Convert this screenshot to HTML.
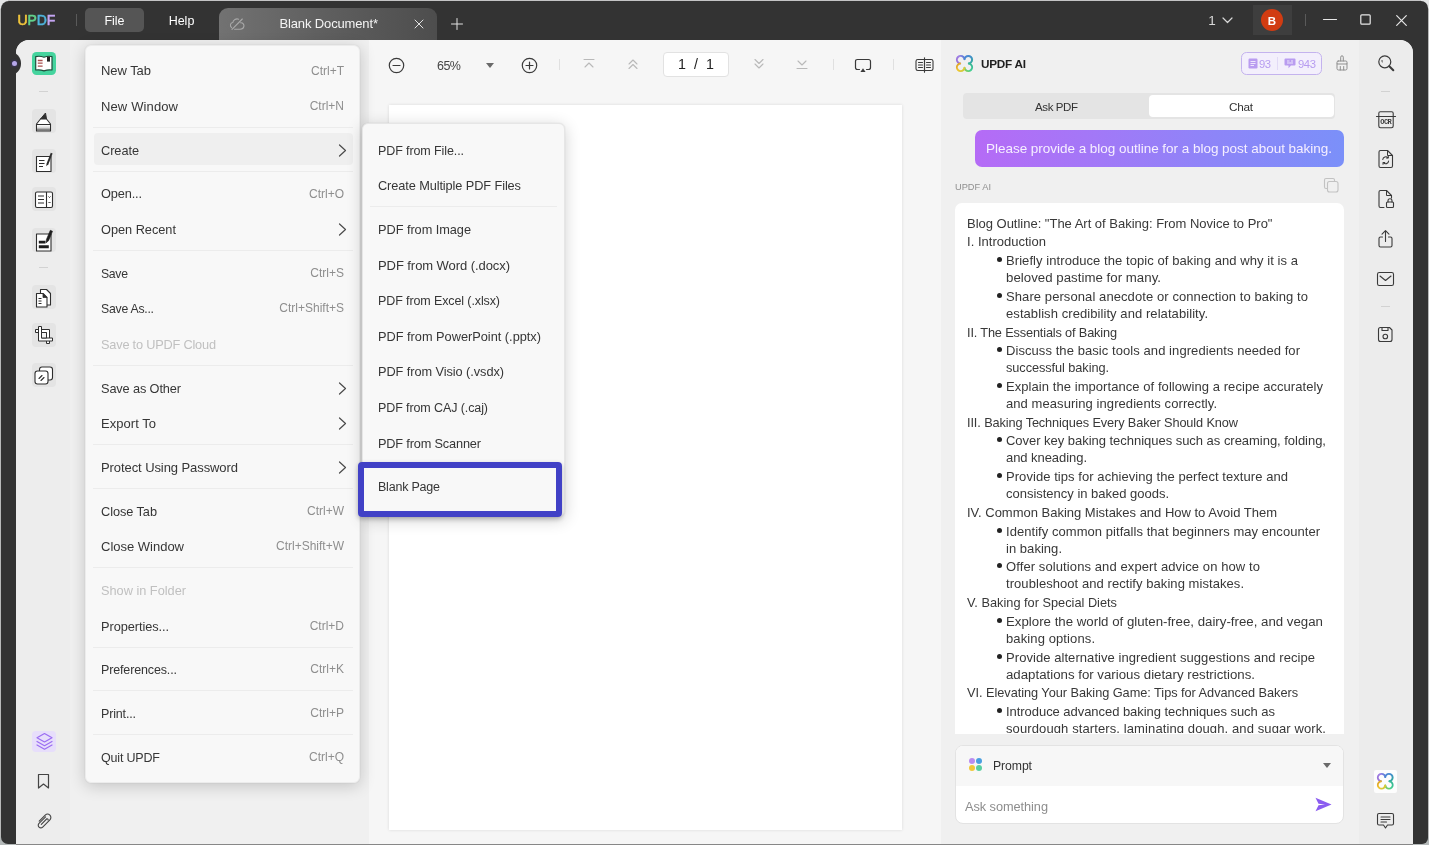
<!DOCTYPE html>
<html lang="en"><head><meta charset="utf-8"><title>UPDF</title>
<style>
*{box-sizing:border-box;margin:0;padding:0}
html,body{width:1429px;height:845px;overflow:hidden}
body{position:relative;background:#333333;font-family:"Liberation Sans",sans-serif;}
.t{position:absolute;white-space:pre;}
.a{position:absolute;}
svg{position:absolute;overflow:visible}
.sep{position:absolute;height:1px;background:#ececec}
#root{position:absolute;left:0;top:0;width:1429px;height:845px;will-change:transform;}

</style></head>
<body>
<div id="root">
<div class="a" style="left:0;top:0;width:1429px;height:845px;background:linear-gradient(180deg,#e4e5e6 0,#e4e5e6 8px,#b8b9b9 9px,#b8b9b9 836px,#b4b9b9 837px)"></div>
<div class="a" style="left:8px;top:0;width:1413px;height:1px;background:#c4c4c5"></div>
<div class="a" style="left:1px;top:1px;width:1427px;height:843px;background:#333333;border-radius:8px 7px 6px 7px"></div>
<div class="a" style="left:16px;top:844px;width:1397px;height:1px;background:#878787"></div>
<div class="a" id="content" style="left:16px;top:40px;width:1397px;height:804px;background:#f6f6f6;border-radius:13px 13px 0 0;overflow:hidden"><div class="a" style="left:0;top:0;width:54px;height:804px;background:#ededed"></div><div class="a" style="left:54px;top:0;width:298.5px;height:804px;background:#f0f0f0"></div><div class="a" style="left:925px;top:0;width:418px;height:804px;background:#f0f0f0"></div><div class="a" style="left:1343px;top:0;width:54px;height:804px;background:#ececec"></div></div>
<div class="a" style="left:389px;top:105px;width:513px;height:725px;background:#ffffff;box-shadow:0 0 3px rgba(0,0,0,.12)"></div>
<div class="t" style="left:17.500px;top:10px;line-height:20px;font-size:14px;font-weight:400;letter-spacing:-0.150px"><span style="color:#f6c93c;-webkit-text-stroke:0.550px #f6c93c">U</span><span style="color:#62d28c;-webkit-text-stroke:0.550px #62d28c">P</span><span style="color:#4eb4dc;-webkit-text-stroke:0.550px #4eb4dc">D</span><span style="color:#c4a5f2;-webkit-text-stroke:0.550px #c4a5f2">F</span></div>
<div class="a" style="left:76px;top:14px;width:1px;height:12px;background:#5a5a5a"></div>
<div class="a" style="left:85px;top:8px;width:59px;height:23.5px;background:#555555;border-radius:5px"></div>
<div class="t" style="left:-85.5px;width:400px;text-align:center;top:12.0px;line-height:18px;font-size:12.5px;color:#ffffff;">File</div>
<div class="t" style="left:-18.5px;width:400px;text-align:center;top:12.0px;line-height:18px;font-size:12.5px;color:#ffffff;">Help</div>
<div class="a" style="left:219px;top:8px;width:218px;height:32px;border-radius:9px 9px 0 0;background:linear-gradient(90deg,#727272 0%,#606060 45%,#4d4d4d 100%)"></div>
<div class="t" style="left:279.5px;top:14.0px;line-height:19px;font-size:13.5px;color:#f4f4f4;letter-spacing:-0.140px;font-size:13.0px;">Blank Document*</div>
<svg style="left:229px;top:16.500px" width="16" height="14" viewBox="0 0 16 14" fill="none" stroke="#a9a9a9" stroke-width="1.100" stroke-linecap="round"><path d="M3 12.300 L13.300 2"/><path d="M2.600 10.600 C0.600 9 1.200 5.800 3.800 5.500 C4.300 2.800 7 1.300 9.600 2.200"/><path d="M11.600 5.800 C14 5.600 15.300 7.600 14.900 9.400 C14.500 11.400 12.900 12.300 11.200 12.300 L5.600 12.300"/></svg>
<svg style="left:414px;top:19px" width="10" height="10" viewBox="0 0 10 10" stroke="#e2e2e2" stroke-width="1" stroke-linecap="round"><path d="M1 1 L9 9 M9 1 L1 9"/></svg>
<svg style="left:451px;top:18px" width="12" height="12" viewBox="0 0 12 12" stroke="#e2e2e2" stroke-width="1" stroke-linecap="round"><path d="M6 0.5 V11.5 M0.5 6 H11.5"/></svg>
<div class="t" style="left:1012px;width:400px;text-align:center;top:11.0px;line-height:19px;font-size:13.5px;color:#d8d8d8;">1</div>
<svg style="left:1222px;top:16.500px" width="11" height="7" viewBox="0 0 11 7" fill="none" stroke="#d8d8d8" stroke-width="1.2" stroke-linecap="round" stroke-linejoin="round"><path d="M1 1 L5.5 5.5 L10 1"/></svg>
<div class="a" style="left:1253px;top:5px;width:39px;height:30px;background:#3e3e3e"></div>
<div class="a" style="left:1261px;top:9px;width:22px;height:22px;border-radius:50%;background:#d13c12"></div>
<div class="t" style="left:1072px;width:400px;text-align:center;top:12.5px;line-height:16px;font-size:11.5px;color:#ffffff;font-weight:700;">B</div>
<div class="a" style="left:1305px;top:14px;width:1px;height:12px;background:#5a5a5a"></div>
<svg style="left:1323px;top:13px" width="14" height="14" viewBox="0 0 14 14" stroke="#e8e8e8" stroke-width="1.2" stroke-linecap="round"><path d="M0.5 6.5 H13.5"/></svg>
<svg style="left:1360px;top:14px" width="11" height="11" viewBox="0 0 11 11" fill="none" stroke="#e8e8e8" stroke-width="1.2"><rect x="0.8" y="0.8" width="9.4" height="9.4" rx="1"/></svg>
<svg style="left:1396px;top:15px" width="11" height="11" viewBox="0 0 11 11" stroke="#e8e8e8" stroke-width="1.2" stroke-linecap="round"><path d="M0.7 0.7 L10.3 10.3 M10.3 0.7 L0.7 10.3"/></svg>
<svg style="left:388px;top:56.5px" width="17" height="17" viewBox="0 0 17 17" fill="none" stroke="#3a3a3a" stroke-width="1.2" stroke-linecap="round"><circle cx="8.5" cy="8.5" r="7.2"/><path d="M5 8.5 H12"/></svg>
<div class="t" style="left:437px;top:56.5px;line-height:18px;font-size:13px;color:#444444;letter-spacing:-0.516px;font-size:12.5px;">65%</div>
<svg style="left:486px;top:63px" width="8" height="5" viewBox="0 0 8 5"><path d="M0 0 H8 L4 5 Z" fill="#6a6a6a"/></svg>
<svg style="left:521px;top:56.5px" width="17" height="17" viewBox="0 0 17 17" fill="none" stroke="#3a3a3a" stroke-width="1.2" stroke-linecap="round"><circle cx="8.5" cy="8.5" r="7.2"/><path d="M5 8.5 H12 M8.5 5 V12"/></svg>
<div class="a" style="left:559px;top:59px;width:1px;height:11px;background:#e0e0e0"></div>
<svg style="left:583px;top:58px" width="12" height="12" viewBox="0 0 12 12" fill="none" stroke="#b9b9b9" stroke-width="1.1" stroke-linecap="round" stroke-linejoin="round"><path d="M1 1.5 H11 M2 9 L6 5 L10 9"/></svg>
<svg style="left:627px;top:58px" width="12" height="12" viewBox="0 0 12 12" fill="none" stroke="#b9b9b9" stroke-width="1.1" stroke-linecap="round" stroke-linejoin="round"><path d="M2 6 L6 2 L10 6 M2 10.5 L6 6.5 L10 10.5"/></svg>
<div class="a" style="left:663px;top:52px;width:66px;height:25px;background:#ffffff;border:1px solid #e2e2e2;border-radius:4px"></div>
<div class="t" style="left:678px;top:54.0px;line-height:20px;font-size:14px;color:#222222;letter-spacing:0.057px;font-size:14.25px;">1  /  1</div>
<svg style="left:753px;top:58px" width="12" height="12" viewBox="0 0 12 12" fill="none" stroke="#b9b9b9" stroke-width="1.1" stroke-linecap="round" stroke-linejoin="round"><path d="M2 1.5 L6 5.5 L10 1.5 M2 6 L6 10 L10 6"/></svg>
<svg style="left:796px;top:58px" width="12" height="12" viewBox="0 0 12 12" fill="none" stroke="#b9b9b9" stroke-width="1.1" stroke-linecap="round" stroke-linejoin="round"><path d="M2 3 L6 7 L10 3 M1 10.5 H11"/></svg>
<div class="a" style="left:833px;top:59px;width:1px;height:11px;background:#e0e0e0"></div>
<svg style="left:854px;top:57.5px" width="18" height="16" viewBox="0 0 18 16" fill="none" stroke="#3a3a3a" stroke-width="1.2" stroke-linecap="round" stroke-linejoin="round"><path d="M5.5 11.5 H3.5 Q1.5 11.500 1.500 9.500 V3.500 Q1.500 1.500 3.500 1.500 H14.500 Q16.500 1.500 16.500 3.500 V9.500 Q16.500 11.500 14.500 11.500 H12.5"/><path d="M9 10.2 L11.600 14 H6.400 Z" fill="#3a3a3a" stroke="none"/></svg>
<div class="a" style="left:893px;top:59px;width:1px;height:11px;background:#e0e0e0"></div>
<svg style="left:915px;top:56.5px" width="19" height="16" viewBox="0 0 19 16" fill="none" stroke="#3a3a3a" stroke-width="1.1" stroke-linecap="round" stroke-linejoin="round"><path d="M9.5 2.5 V14.5 M9.5 2.500 H2.800 Q1 2.500 1 4.200 V11.800 Q1 13.500 2.800 13.500 H9.5 M9.5 2.500 H16.200 Q18 2.500 18 4.200 V11.800 Q18 13.500 16.200 13.500 H9.5"/><path d="M3.500 5.500 H7.500 M3.500 8 H7.500 M3.500 10.500 H7.500 M11.500 5.500 H15.500 M11.500 8 H15.500 M11.500 10.500 H15.500"/><path d="M9.5 0.800 V15.200"/></svg>
<div class="a" style="left:85px;top:45px;width:275px;height:737.5px;background:#f8f8f8;border-radius:6px;border:1px solid #ececec;box-shadow:0 3px 16px rgba(0,0,0,.19),0 0 2px rgba(0,0,0,.10)"></div>
<div class="a" style="left:94px;top:133.2px;width:259px;height:31.6px;background:#efefef;border-radius:4px"></div>
<div class="t" style="left:101px;top:62.4px;line-height:18px;font-size:13px;color:#363636;letter-spacing:-0.057px;font-size:13.0px;">New Tab</div>
<div class="t" style="right:1085px;top:62.5px;line-height:17px;font-size:12px;color:#8e8e8e;">Ctrl+T</div>
<div class="t" style="left:101px;top:98.0px;line-height:18px;font-size:13px;color:#363636;letter-spacing:0.127px;font-size:13.0px;">New Window</div>
<div class="t" style="right:1085px;top:98.1px;line-height:17px;font-size:12px;color:#8e8e8e;">Ctrl+N</div>
<div class="sep" style="left:93px;top:127px;width:260px"></div>
<div class="t" style="left:101px;top:141.7px;line-height:18px;font-size:13px;color:#363636;letter-spacing:-0.056px;font-size:12.75px;">Create</div>
<svg style="left:338px;top:143.7px" width="9" height="13" viewBox="0 0 9 13" fill="none" stroke="#4a4a4a" stroke-width="1.2" stroke-linecap="round" stroke-linejoin="round"><path d="M1.500 1 L7.500 6.500 L1.500 12"/></svg>
<div class="sep" style="left:93px;top:171px;width:260px"></div>
<div class="t" style="left:101px;top:185.4px;line-height:18px;font-size:13px;color:#363636;letter-spacing:-0.138px;font-size:12.75px;">Open...</div>
<div class="t" style="right:1085px;top:185.5px;line-height:17px;font-size:12px;color:#8e8e8e;">Ctrl+O</div>
<div class="t" style="left:101px;top:221.0px;line-height:18px;font-size:13px;color:#363636;letter-spacing:-0.014px;font-size:12.75px;">Open Recent</div>
<svg style="left:338px;top:223.0px" width="9" height="13" viewBox="0 0 9 13" fill="none" stroke="#4a4a4a" stroke-width="1.2" stroke-linecap="round" stroke-linejoin="round"><path d="M1.500 1 L7.500 6.500 L1.500 12"/></svg>
<div class="sep" style="left:93px;top:250px;width:260px"></div>
<div class="t" style="left:101px;top:264.7px;line-height:18px;font-size:13px;color:#363636;letter-spacing:-0.307px;font-size:12.25px;">Save</div>
<div class="t" style="right:1085px;top:264.8px;line-height:17px;font-size:12px;color:#8e8e8e;">Ctrl+S</div>
<div class="t" style="left:101px;top:300.3px;line-height:18px;font-size:13px;color:#363636;letter-spacing:-0.240px;font-size:12.25px;">Save As...</div>
<div class="t" style="right:1085px;top:300.4px;line-height:17px;font-size:12px;color:#8e8e8e;">Ctrl+Shift+S</div>
<div class="t" style="left:101px;top:335.9px;line-height:18px;font-size:13px;color:#c0c0c0;letter-spacing:-0.197px;font-size:12.75px;">Save to UPDF Cloud</div>
<div class="sep" style="left:93px;top:365px;width:260px"></div>
<div class="t" style="left:101px;top:379.6px;line-height:18px;font-size:13px;color:#363636;letter-spacing:-0.125px;font-size:12.75px;">Save as Other</div>
<svg style="left:338px;top:381.6px" width="9" height="13" viewBox="0 0 9 13" fill="none" stroke="#4a4a4a" stroke-width="1.2" stroke-linecap="round" stroke-linejoin="round"><path d="M1.500 1 L7.500 6.500 L1.500 12"/></svg>
<div class="t" style="left:101px;top:415.2px;line-height:18px;font-size:13px;color:#363636;letter-spacing:0.039px;font-size:13.0px;">Export To</div>
<svg style="left:338px;top:417.2px" width="9" height="13" viewBox="0 0 9 13" fill="none" stroke="#4a4a4a" stroke-width="1.2" stroke-linecap="round" stroke-linejoin="round"><path d="M1.500 1 L7.500 6.500 L1.500 12"/></svg>
<div class="sep" style="left:93px;top:444px;width:260px"></div>
<div class="t" style="left:101px;top:458.9px;line-height:18px;font-size:13px;color:#363636;letter-spacing:-0.083px;font-size:13.0px;">Protect Using Password</div>
<svg style="left:338px;top:460.9px" width="9" height="13" viewBox="0 0 9 13" fill="none" stroke="#4a4a4a" stroke-width="1.2" stroke-linecap="round" stroke-linejoin="round"><path d="M1.500 1 L7.500 6.500 L1.500 12"/></svg>
<div class="sep" style="left:93px;top:488px;width:260px"></div>
<div class="t" style="left:101px;top:502.6px;line-height:18px;font-size:13px;color:#363636;letter-spacing:-0.059px;font-size:12.75px;">Close Tab</div>
<div class="t" style="right:1085px;top:502.7px;line-height:17px;font-size:12px;color:#8e8e8e;">Ctrl+W</div>
<div class="t" style="left:101px;top:538.2px;line-height:18px;font-size:13px;color:#363636;letter-spacing:-0.009px;font-size:13.0px;">Close Window</div>
<div class="t" style="right:1085px;top:538.3px;line-height:17px;font-size:12px;color:#8e8e8e;">Ctrl+Shift+W</div>
<div class="sep" style="left:93px;top:567px;width:260px"></div>
<div class="t" style="left:101px;top:581.9px;line-height:18px;font-size:13px;color:#c0c0c0;letter-spacing:-0.004px;font-size:12.75px;">Show in Folder</div>
<div class="t" style="left:101px;top:617.5px;line-height:18px;font-size:13px;color:#363636;letter-spacing:-0.062px;font-size:12.75px;">Properties...</div>
<div class="t" style="right:1085px;top:617.6px;line-height:17px;font-size:12px;color:#8e8e8e;">Ctrl+D</div>
<div class="sep" style="left:93px;top:647px;width:260px"></div>
<div class="t" style="left:101px;top:661.2px;line-height:18px;font-size:13px;color:#363636;letter-spacing:-0.141px;font-size:12.5px;">Preferences...</div>
<div class="t" style="right:1085px;top:661.3px;line-height:17px;font-size:12px;color:#8e8e8e;">Ctrl+K</div>
<div class="sep" style="left:93px;top:690px;width:260px"></div>
<div class="t" style="left:101px;top:704.9px;line-height:18px;font-size:13px;color:#363636;letter-spacing:-0.161px;font-size:12.5px;">Print...</div>
<div class="t" style="right:1085px;top:705.0px;line-height:17px;font-size:12px;color:#8e8e8e;">Ctrl+P</div>
<div class="sep" style="left:93px;top:734px;width:260px"></div>
<div class="t" style="left:101px;top:748.6px;line-height:18px;font-size:13px;color:#363636;letter-spacing:-0.180px;font-size:12.5px;">Quit UPDF</div>
<div class="t" style="right:1085px;top:748.7px;line-height:17px;font-size:12px;color:#8e8e8e;">Ctrl+Q</div>
<div class="a" style="left:362px;top:123px;width:203px;height:394px;background:#f8f8f8;border-radius:6px;border:1px solid #e6e6e6;box-shadow:0 3px 16px rgba(0,0,0,.19),0 0 2px rgba(0,0,0,.10)"></div>
<div class="t" style="left:378px;top:141.7px;line-height:18px;font-size:13px;color:#363636;letter-spacing:-0.101px;font-size:12.5px;">PDF from File...</div>
<div class="t" style="left:378px;top:177.3px;line-height:18px;font-size:13px;color:#363636;letter-spacing:-0.094px;font-size:12.75px;">Create Multiple PDF Files</div>
<div class="sep" style="left:370px;top:206px;width:187px"></div>
<div class="t" style="left:378px;top:221.0px;line-height:18px;font-size:13px;color:#363636;letter-spacing:-0.041px;font-size:12.75px;">PDF from Image</div>
<div class="t" style="left:378px;top:256.6px;line-height:18px;font-size:13px;color:#363636;letter-spacing:-0.070px;font-size:13.0px;">PDF from Word (.docx)</div>
<div class="t" style="left:378px;top:292.2px;line-height:18px;font-size:13px;color:#363636;letter-spacing:-0.110px;font-size:12.5px;">PDF from Excel (.xlsx)</div>
<div class="t" style="left:378px;top:327.8px;line-height:18px;font-size:13px;color:#363636;letter-spacing:0.001px;font-size:12.75px;">PDF from PowerPoint (.pptx)</div>
<div class="t" style="left:378px;top:363.4px;line-height:18px;font-size:13px;color:#363636;letter-spacing:-0.062px;font-size:12.75px;">PDF from Visio (.vsdx)</div>
<div class="t" style="left:378px;top:399.0px;line-height:18px;font-size:13px;color:#363636;letter-spacing:-0.101px;font-size:12.5px;">PDF from CAJ (.caj)</div>
<div class="t" style="left:378px;top:434.6px;line-height:18px;font-size:13px;color:#363636;letter-spacing:-0.172px;font-size:12.75px;">PDF from Scanner</div>
<div class="t" style="left:378px;top:478.3px;line-height:18px;font-size:13px;color:#363636;letter-spacing:-0.215px;font-size:12.5px;">Blank Page</div>
<div class="a" style="left:358px;top:462px;width:204px;height:54.5px;border:6.6px solid #4141c6;border-radius:4px;box-shadow:0 2px 5px rgba(0,0,0,.25)"></div>
<svg style="left:955.2px;top:53.7px" width="19" height="19" viewBox="0 0 20 20" fill="none" stroke-width="2.1" stroke-linecap="round"><defs><linearGradient id="ca1" gradientUnits="userSpaceOnUse" x1="2" y1="9" x2="10" y2="4"><stop offset="0" stop-color="#9a72d8"/><stop offset="0.6" stop-color="#9f80e6"/><stop offset="1" stop-color="#5d7fd8"/></linearGradient><linearGradient id="cb1" gradientUnits="userSpaceOnUse" x1="10" y1="4" x2="17" y2="10"><stop offset="0" stop-color="#4c86d4"/><stop offset="0.6" stop-color="#3f93c4"/><stop offset="1" stop-color="#35ac9c"/></linearGradient><linearGradient id="cc1" gradientUnits="userSpaceOnUse" x1="17" y1="10" x2="10" y2="17"><stop offset="0" stop-color="#36b596"/><stop offset="0.6" stop-color="#45d192"/><stop offset="1" stop-color="#86cc58"/></linearGradient><linearGradient id="cd1" gradientUnits="userSpaceOnUse" x1="10" y1="17" x2="3" y2="10"><stop offset="0" stop-color="#cfca3c"/><stop offset="0.5" stop-color="#f2c62f"/><stop offset="1" stop-color="#dda22a"/></linearGradient></defs><path d="M5.400 10 Q4.100 9.750 3.170 8.830 A4 4 0 0 1 8.830 3.170 Q9.750 4.100 10 5.400" stroke="url(#ca1)"/><path d="M10 5.400 Q10.250 4.100 11.170 3.170 A4 4 0 0 1 16.830 8.830 Q15.900 9.750 14.600 10" stroke="url(#cb1)"/><path d="M14.600 10 Q15.900 10.250 16.830 11.170 A4 4 0 0 1 11.170 16.830 Q10.250 15.900 10 14.600" stroke="url(#cc1)"/><path d="M10 14.600 Q9.750 15.900 8.830 16.830 A4 4 0 0 1 3.170 11.170 Q4.100 10.250 5.400 10" stroke="url(#cd1)"/></svg>
<div class="t" style="left:981px;top:54.5px;line-height:18px;font-size:12.5px;color:#1f1f1f;font-weight:700;letter-spacing:-0.263px;font-size:11.75px;">UPDF AI</div>
<div class="a" style="left:1241px;top:52px;width:81px;height:23px;border:1px solid #c4b3ee;border-radius:5.500px;background:#f3effc"></div>
<svg style="left:1248px;top:58px" width="10" height="11" viewBox="0 0 10 11"><rect x="0.5" y="0.5" width="9" height="10" rx="1.2" fill="#b99cf0"/><path d="M2.500 3.500 H7.500 M2.500 5.500 H7.500 M2.500 7.500 H6" stroke="#f3eefd" stroke-width="0.9"/></svg>
<div class="t" style="left:1259px;top:55.5px;line-height:17px;font-size:12px;color:#b79cf0;letter-spacing:-0.516px;font-size:11.25px;">93</div>
<div class="a" style="left:1277px;top:57px;width:1px;height:13px;background:#e2daf6"></div>
<svg style="left:1284px;top:58px" width="12" height="11" viewBox="0 0 12 11"><path d="M1.500 0.500 H10.500 Q11.500 0.500 11.500 1.500 V6.500 Q11.500 7.500 10.500 7.500 H7 L4.500 10.300 V7.500 H1.500 Q0.500 7.500 0.500 6.500 V1.500 Q0.500 0.500 1.500 0.500 Z" fill="#b99cf0"/><path d="M3 3 H5.500 M7 3 H9 M3 5 H9" stroke="#f3eefd" stroke-width="0.9"/></svg>
<div class="t" style="left:1298px;top:55.5px;line-height:17px;font-size:12px;color:#b79cf0;letter-spacing:-0.391px;font-size:11.25px;">943</div>
<svg style="left:1336px;top:54.500px" width="12" height="16" viewBox="0 0 12 16" fill="none" stroke="#8f8f8f" stroke-width="1" stroke-linecap="round" stroke-linejoin="round"><path d="M4.700 6 V2.200 Q4.700 0.800 6 0.800 Q7.300 0.800 7.300 2.200 V6"/><path d="M2.200 6 H9.800 Q11 6 11 7.200 V9 H1 V7.200 Q1 6 2.200 6 Z"/><path d="M1 9 V13.500 Q1 15 2.500 15 H9.500 Q11 15 11 13.500 V9 M4.300 11.500 V15 M7.700 11.500 V15"/></svg>
<div class="a" style="left:963px;top:93px;width:372px;height:26px;background:#e4e4e4;border-radius:4px"></div>
<div class="a" style="left:1149px;top:95px;width:185px;height:22px;background:#ffffff;border-radius:4px"></div>
<div class="t" style="left:1035px;top:97.5px;line-height:18px;font-size:12.5px;color:#333333;letter-spacing:-0.396px;font-size:11.5px;">Ask PDF</div>
<div class="t" style="left:1229px;top:97.5px;line-height:18px;font-size:12.5px;color:#333333;letter-spacing:-0.276px;font-size:11.75px;">Chat</div>
<div class="a" style="left:975px;top:129.7px;width:369px;height:37px;border-radius:7px;background:linear-gradient(90deg,#b56bf6 0%,#a477f7 30%,#8d85f8 65%,#7b90f9 100%)"></div>
<div class="t" style="left:986px;top:139.0px;line-height:19px;font-size:13.5px;color:#f6efff;letter-spacing:-0.026px;font-size:13.5px;">Please provide a blog outline for a blog post about baking.</div>
<div class="t" style="left:955px;top:180.5px;line-height:13px;font-size:9.5px;color:#8f8f8f;letter-spacing:0.003px;font-size:9.25px;">UPDF AI</div>
<svg style="left:1323px;top:177px" width="16" height="16" viewBox="0 0 16 16" fill="none" stroke="#c2c2c2" stroke-width="1.1" stroke-linejoin="round"><path d="M4.500 11.500 H3 Q1.500 11.500 1.500 10 V3 Q1.500 1.500 3 1.500 H10 Q11.500 1.500 11.500 3 V4.500"/><rect x="4.500" y="4.500" width="10.500" height="10.500" rx="2"/></svg>
<div class="a" style="left:955px;top:203px;width:388.5px;height:531px;background:#ffffff;border-radius:7px 7px 0 0"></div>
<div class="a" style="left:955px;top:203px;width:388px;height:530.3px;overflow:hidden">
<div class="t" style="left:12px;top:11.7px;line-height:18px;font-size:13px;color:#383838;letter-spacing:-0.014px;font-size:13.0px;">Blog Outline: &quot;The Art of Baking: From Novice to Pro&quot;</div>
<div class="t" style="left:12px;top:29.7px;line-height:18px;font-size:13px;color:#383838;letter-spacing:0.016px;font-size:13.0px;">I. Introduction</div>
<div class="a" style="left:42px;top:53.8px;width:5px;height:5px;border-radius:50%;background:#222"></div>
<div class="t" style="left:51px;top:48.7px;line-height:18px;font-size:13px;color:#383838;letter-spacing:0.071px;font-size:13.0px;">Briefly introduce the topic of baking and why it is a</div>
<div class="t" style="left:51px;top:65.7px;line-height:18px;font-size:13px;color:#383838;letter-spacing:0.024px;font-size:13.25px;">beloved pastime for many.</div>
<div class="a" style="left:42px;top:89.8px;width:5px;height:5px;border-radius:50%;background:#222"></div>
<div class="t" style="left:51px;top:84.7px;line-height:18px;font-size:13px;color:#383838;letter-spacing:0.086px;font-size:13.0px;">Share personal anecdote or connection to baking to</div>
<div class="t" style="left:51px;top:101.7px;line-height:18px;font-size:13px;color:#383838;letter-spacing:0.074px;font-size:13.0px;">establish credibility and relatability.</div>
<div class="t" style="left:12px;top:120.7px;line-height:18px;font-size:13px;color:#383838;letter-spacing:-0.158px;font-size:12.75px;">II. The Essentials of Baking</div>
<div class="a" style="left:42px;top:144.3px;width:5px;height:5px;border-radius:50%;background:#222"></div>
<div class="t" style="left:51px;top:139.2px;line-height:18px;font-size:13px;color:#383838;letter-spacing:0.071px;font-size:13.0px;">Discuss the basic tools and ingredients needed for</div>
<div class="t" style="left:51px;top:156.2px;line-height:18px;font-size:13px;color:#383838;letter-spacing:-0.070px;font-size:12.75px;">successful baking.</div>
<div class="a" style="left:42px;top:179.8px;width:5px;height:5px;border-radius:50%;background:#222"></div>
<div class="t" style="left:51px;top:174.7px;line-height:18px;font-size:13px;color:#383838;letter-spacing:0.062px;font-size:13.0px;">Explain the importance of following a recipe accurately</div>
<div class="t" style="left:51px;top:191.7px;line-height:18px;font-size:13px;color:#383838;letter-spacing:0.069px;font-size:13.0px;">and measuring ingredients correctly.</div>
<div class="t" style="left:12px;top:210.7px;line-height:18px;font-size:13px;color:#383838;letter-spacing:-0.115px;font-size:12.75px;">III. Baking Techniques Every Baker Should Know</div>
<div class="a" style="left:42px;top:234.3px;width:5px;height:5px;border-radius:50%;background:#222"></div>
<div class="t" style="left:51px;top:229.2px;line-height:18px;font-size:13px;color:#383838;letter-spacing:-0.030px;font-size:13.0px;">Cover key baking techniques such as creaming, folding,</div>
<div class="t" style="left:51px;top:246.2px;line-height:18px;font-size:13px;color:#383838;letter-spacing:-0.057px;font-size:13.0px;">and kneading.</div>
<div class="a" style="left:42px;top:269.8px;width:5px;height:5px;border-radius:50%;background:#222"></div>
<div class="t" style="left:51px;top:264.7px;line-height:18px;font-size:13px;color:#383838;letter-spacing:0.062px;font-size:13.0px;">Provide tips for achieving the perfect texture and</div>
<div class="t" style="left:51px;top:281.7px;line-height:18px;font-size:13px;color:#383838;letter-spacing:-0.013px;font-size:13.0px;">consistency in baked goods.</div>
<div class="t" style="left:12px;top:300.7px;line-height:18px;font-size:13px;color:#383838;letter-spacing:-0.010px;font-size:13.0px;">IV. Common Baking Mistakes and How to Avoid Them</div>
<div class="a" style="left:42px;top:324.8px;width:5px;height:5px;border-radius:50%;background:#222"></div>
<div class="t" style="left:51px;top:319.7px;line-height:18px;font-size:13px;color:#383838;letter-spacing:0.049px;font-size:13.0px;">Identify common pitfalls that beginners may encounter</div>
<div class="t" style="left:51px;top:336.7px;line-height:18px;font-size:13px;color:#383838;letter-spacing:0.038px;font-size:13.0px;">in baking.</div>
<div class="a" style="left:42px;top:360.3px;width:5px;height:5px;border-radius:50%;background:#222"></div>
<div class="t" style="left:51px;top:355.2px;line-height:18px;font-size:13px;color:#383838;letter-spacing:0.100px;font-size:13.0px;">Offer solutions and expert advice on how to</div>
<div class="t" style="left:51px;top:372.2px;line-height:18px;font-size:13px;color:#383838;letter-spacing:0.061px;font-size:13.0px;">troubleshoot and rectify baking mistakes.</div>
<div class="t" style="left:12px;top:390.7px;line-height:18px;font-size:13px;color:#383838;letter-spacing:0.008px;font-size:12.75px;">V. Baking for Special Diets</div>
<div class="a" style="left:42px;top:414.8px;width:5px;height:5px;border-radius:50%;background:#222"></div>
<div class="t" style="left:51px;top:409.7px;line-height:18px;font-size:13px;color:#383838;letter-spacing:0.005px;font-size:13.25px;">Explore the world of gluten-free, dairy-free, and vegan</div>
<div class="t" style="left:51px;top:426.7px;line-height:18px;font-size:13px;color:#383838;letter-spacing:0.110px;font-size:13.0px;">baking options.</div>
<div class="a" style="left:42px;top:450.8px;width:5px;height:5px;border-radius:50%;background:#222"></div>
<div class="t" style="left:51px;top:445.7px;line-height:18px;font-size:13px;color:#383838;letter-spacing:0.063px;font-size:13.0px;">Provide alternative ingredient suggestions and recipe</div>
<div class="t" style="left:51px;top:462.7px;line-height:18px;font-size:13px;color:#383838;letter-spacing:0.001px;font-size:13.25px;">adaptations for various dietary restrictions.</div>
<div class="t" style="left:12px;top:481.2px;line-height:18px;font-size:13px;color:#383838;letter-spacing:-0.038px;font-size:12.75px;">VI. Elevating Your Baking Game: Tips for Advanced Bakers</div>
<div class="a" style="left:42px;top:505.3px;width:5px;height:5px;border-radius:50%;background:#222"></div>
<div class="t" style="left:51px;top:500.2px;line-height:18px;font-size:13px;color:#383838;letter-spacing:-0.047px;font-size:13.0px;">Introduce advanced baking techniques such as</div>
<div class="t" style="left:51px;top:516.7px;line-height:18px;font-size:13px;color:#383838;letter-spacing:0.108px;font-size:13.0px;">sourdough starters, laminating dough, and sugar work.</div>
</div>
<div class="a" style="left:955px;top:744.5px;width:388.5px;height:79.5px;background:#ffffff;border:1px solid #e3e3e3;border-radius:8px;overflow:hidden"><div class="a" style="left:0;top:0;width:388px;height:40px;background:#f7f7f7"></div></div>
<svg style="left:968px;top:757px" width="15" height="15" viewBox="0 0 15 15"><circle cx="4" cy="4" r="3" fill="#b98cf0"/><circle cx="11" cy="4" r="3" fill="#4a9fe0"/><circle cx="4" cy="11" r="3" fill="#f0c93a"/><circle cx="11" cy="11" r="3" fill="#58cfa0"/></svg>
<div class="t" style="left:993px;top:756.5px;line-height:18px;font-size:12.5px;color:#333333;letter-spacing:-0.097px;font-size:12.25px;">Prompt</div>
<svg style="left:1323px;top:763px" width="8" height="5" viewBox="0 0 8 5"><path d="M0 0 H8 L4 5 Z" fill="#6a6a6a"/></svg>
<div class="t" style="left:965px;top:797.5px;line-height:18px;font-size:13px;color:#8d8d8d;letter-spacing:-0.052px;font-size:12.75px;">Ask something</div>
<svg style="left:1315px;top:797px" width="17" height="15" viewBox="0 0 17 15"><path d="M0.500 0.800 L16.500 7.500 L0.500 14.200 L3.500 8.300 L10 7.500 L3.500 6.700 Z" fill="#8b5cf0"/></svg>
<div class="a" style="left:6px;top:52px;width:15px;height:22.500px;border-radius:0 11px 11px 0 / 0 11.250px 11.250px 0;background:#333333"></div>
<div class="a" style="left:11.500px;top:61px;width:5px;height:5px;border-radius:50%;background:#b6a7ea;box-shadow:0 0 2px 1px rgba(60,50,110,.6)"></div>
<div class="a" style="left:32px;top:51.500px;width:24px;height:23.700px;border-radius:4.500px;background:#45d49e"></div>
<svg style="left:32px;top:51.500px" width="24" height="24" viewBox="0 0 24 24"><path d="M3.700 4.600 Q8 3.700 12 5.200 Q16 3.700 20 4.600 V18 Q16 17.300 12 18.900 Q8 17.300 3.700 18 Z" fill="#ffffff" stroke="#1f4d3c" stroke-width="1.200" stroke-linejoin="round"/><path d="M5.800 8.500 H10.600 M5.800 11.200 H10.600 M5.800 14.200 H10.600" stroke="#a8504e" stroke-width="1.300"/><path d="M15 4.600 H18 V9.600 H15 Z" fill="#222222"/></svg>
<div class="a" style="left:39px;top:91px;width:9px;height:1px;background:#d2d2d2"></div>
<div class="a" style="left:32px;top:108.5px;width:24px;height:24.5px;border-radius:4px;background:#e4e4e4"></div>
<svg style="left:31px;top:109px" width="25" height="25" viewBox="0 0 25 25"><defs><linearGradient id="hg" x1="0" y1="0" x2="0" y2="1"><stop offset="0" stop-color="#ffffff"/><stop offset="0.5" stop-color="#d8d8d8"/><stop offset="1" stop-color="#555555"/></linearGradient></defs><path d="M14.500 4 L15.500 10 H9.500 Z" fill="#2e2e2e" stroke="#2e2e2e" stroke-width="1" stroke-linejoin="round"/><path d="M9.500 10 H15.500 L19.500 15 V22 H5.500 V15 Z" fill="#ffffff" stroke="#2e2e2e" stroke-width="1.100" stroke-linejoin="round"/><path d="M6 16 H19 V21.500 H6 Z" fill="url(#hg)"/><path d="M5.500 15.500 H19.500" stroke="#2e2e2e" stroke-width="1"/></svg>
<div class="a" style="left:32px;top:148.5px;width:24px;height:24.5px;border-radius:4px;background:#e4e4e4"></div>
<svg style="left:31px;top:149px" width="25" height="25" viewBox="0 0 25 25"><path d="M5.500 7.500 H20 V22.500 H5.500 Z" fill="#ffffff" stroke="#2e2e2e" stroke-width="1.100" stroke-linejoin="round"/><path d="M8 11.500 H13.500 M8 14.500 H13.500 M8 17.500 H12" stroke="#2e2e2e" stroke-width="1.100"/><path d="M19.800 3.800 L15.600 14.500 L15.200 17.200 L17.400 15.300 L21.600 4.600 Z" fill="#2e2e2e"/></svg>
<div class="a" style="left:32px;top:186.5px;width:24px;height:24.5px;border-radius:4px;background:#e4e4e4"></div>
<svg style="left:31px;top:187px" width="25" height="25" viewBox="0 0 25 25"><rect x="4.500" y="5" width="17" height="15.500" rx="1.500" fill="#ffffff" stroke="#2e2e2e" stroke-width="1.100"/><path d="M15.500 5 V20.500" stroke="#2e2e2e" stroke-width="1.100"/><path d="M7 9 H13 M7 12.500 H13 M7 16 H13" stroke="#2e2e2e" stroke-width="1.100"/><path d="M17.500 9.500 L18.500 10.500 L19.500 9.500 M17.500 15 L18.500 16 L19.500 15" stroke="#2e2e2e" stroke-width="1" fill="none"/></svg>
<div class="a" style="left:32px;top:227.5px;width:24px;height:24.5px;border-radius:4px;background:#e4e4e4"></div>
<svg style="left:31px;top:228px" width="25" height="25" viewBox="0 0 25 25"><path d="M5.500 6 H20 V23 H5.500 Z" fill="#ffffff" stroke="#2e2e2e" stroke-width="1.100" stroke-linejoin="round"/><path d="M7.800 12.800 H14.500 V15.600 H7.800 Z M7.800 17.300 H17.800 V20.300 H7.800 Z" fill="#1e1e1e"/><path d="M19.300 2.300 L15.400 11.600 L15.100 14.800 L17.600 12.700 L21.500 3.300 Z" fill="#1e1e1e" stroke="#1e1e1e" stroke-width="0.600" stroke-linejoin="round"/></svg>
<div class="a" style="left:39px;top:267px;width:9px;height:1px;background:#d2d2d2"></div>
<div class="a" style="left:32px;top:284.5px;width:24px;height:24.5px;border-radius:4px;background:#e4e4e4"></div>
<svg style="left:31px;top:285px" width="25" height="25" viewBox="0 0 25 25"><path d="M9.500 8 V4.500 H15.500 L19.500 8.500 V20 H16" fill="#ffffff" stroke="#2e2e2e" stroke-width="1.100" stroke-linejoin="round"/><path d="M5.500 8.500 H12 L16 12.500 V22 H5.500 Z" fill="#ffffff" stroke="#2e2e2e" stroke-width="1.100" stroke-linejoin="round"/><path d="M12 8.500 V12.500 H16 Z" fill="#2e2e2e" stroke="#2e2e2e" stroke-width="0.800" stroke-linejoin="round"/><path d="M7.500 13.500 H10.500 M7.500 16 H10.500 M7.500 18.500 H10.500" stroke="#2e2e2e" stroke-width="1"/></svg>
<div class="a" style="left:32px;top:322.5px;width:24px;height:24.5px;border-radius:4px;background:#e4e4e4"></div>
<svg style="left:32px;top:323px" width="24" height="24" viewBox="0 0 24 24" fill="#ffffff" stroke="#2e2e2e" stroke-width="1" stroke-linejoin="round"><path d="M3.500 6.500 H17.500 V20.500 H14.500 V9.500 H3.500 Z"/><path d="M6.500 3.500 H9.500 V15 H20.500 V18 H6.500 Z"/><path d="M9.500 9.500 H14.500 V15 H9.500 Z" fill="#f2f2f2"/></svg>
<div class="a" style="left:32px;top:362.5px;width:24px;height:24.5px;border-radius:4px;background:#e4e4e4"></div>
<svg style="left:31px;top:363px" width="25" height="25" viewBox="0 0 25 25" fill="none" stroke="#2e2e2e" stroke-width="1.100"><rect x="8.500" y="4" width="13" height="13" rx="2.500" fill="#ffffff"/><rect x="4" y="8" width="13" height="13" rx="2.500" fill="#ffffff"/><path d="M8 15.500 L11 12.500 M10 17.500 L13 14.500" stroke-linecap="round"/></svg>
<div class="a" style="left:32px;top:730.5px;width:24px;height:21.500px;border-radius:4px;background:#e7defb"></div>
<svg style="left:34.500px;top:732px" width="19" height="19" viewBox="0 0 19 19" fill="none" stroke="#9b6df2" stroke-width="1.200" stroke-linejoin="round" stroke-linecap="round"><path d="M9.500 1.500 L17 5.800 L9.500 10 L2 5.800 Z"/><path d="M2 9.500 L9.500 13.700 L17 9.500 M2 13 L9.500 17.200 L17 13"/></svg>
<svg style="left:37px;top:773px" width="13" height="17" viewBox="0 0 13 17" fill="none" stroke="#444444" stroke-width="1.200" stroke-linejoin="round"><path d="M1.500 1.500 H11.500 V15 L6.500 11 L1.500 15 Z"/></svg>
<svg style="left:35px;top:812px" width="18" height="18" viewBox="0 0 18 18" fill="none" stroke="#444444" stroke-width="1.100" stroke-linecap="round"><path d="M4.200 9.200 L10.200 3.200 A3.300 3.300 0 0 1 14.900 7.900 L7.700 15.100 A2.600 2.600 0 0 1 4 11.400 L10.600 4.800 M10.600 4.800 L4 11.400 A2.600 2.600 0 0 0 7.700 15.100" /><path d="M6.300 12.300 L11.800 6.800 A1 1 0 0 1 13.100 8.100" /></svg>
<svg style="left:1377px;top:54px" width="18" height="18" viewBox="0 0 18 18" fill="none" stroke="#3a3a3a" stroke-linecap="round"><circle cx="7.800" cy="7.800" r="6" stroke-width="1.200"/><path d="M12.300 12.300 L16.300 16.300" stroke-width="2"/><path d="M5 6.500 Q5 7.500 5.200 8" stroke-width="1"/></svg>
<div class="a" style="left:1381px;top:91px;width:9px;height:1px;background:#d2d2d2"></div>
<svg style="left:1376px;top:110px" width="20" height="19" viewBox="0 0 20 19" fill="none" stroke="#3a3a3a" stroke-width="1.100" stroke-linejoin="round"><path d="M2.800 6 V3.300 Q2.800 1.800 4.300 1.800 H15.700 Q17.200 1.800 17.200 3.300 V6"/><path d="M0.500 6.500 H19.500" stroke-linecap="round"/><path d="M2.800 7 V16 Q2.800 17.700 4.500 17.700 H15.500 Q17.200 17.700 17.200 16 V7"/></svg>
<div class="t" style="left:1380.300px;top:119.300px;font-size:7px;line-height:7px;font-weight:700;color:#3a3a3a;letter-spacing:-0.600px;font-family:'Liberation Mono',monospace">OCR</div>
<svg style="left:1377px;top:149px" width="17" height="20" viewBox="0 0 17 20" fill="none" stroke="#3a3a3a" stroke-width="1.100" stroke-linejoin="round" stroke-linecap="round"><path d="M3.500 1.500 H10.500 L15.500 6.500 V17 Q15.500 18.500 14 18.500 H3.500 Q2 18.500 2 17 V3 Q2 1.500 3.500 1.500 Z"/><path d="M10.500 1.500 V6.500 H15.500" stroke-width="1"/><path d="M5.800 10.500 A3 3 0 0 1 11 8.800 M11.600 12 A3 3 0 0 1 6.300 13.700"/><path d="M11.300 7.200 V9 H9.500 M6 15.300 V13.500 H7.800" stroke-width="1"/></svg>
<svg style="left:1377px;top:189px" width="18" height="21" viewBox="0 0 18 21" fill="none" stroke="#3a3a3a" stroke-width="1.100" stroke-linejoin="round" stroke-linecap="round"><path d="M7 18.500 H3.500 Q2 18.500 2 17 V3 Q2 1.500 3.500 1.500 H9.500 L14.500 6.500 V9"/><path d="M9.500 1.500 V6.500 H14.500" stroke-width="1"/><rect x="9.500" y="13" width="7" height="5.500" rx="1"/><path d="M11 13 V11.800 A2 2 0 0 1 15 11.800 V13"/></svg>
<svg style="left:1377px;top:229px" width="17" height="20" viewBox="0 0 17 20" fill="none" stroke="#3a3a3a" stroke-width="1.100" stroke-linejoin="round" stroke-linecap="round"><path d="M5.500 8 H3.500 Q2 8 2 9.500 V16.500 Q2 18 3.500 18 H13.500 Q15 18 15 16.500 V9.500 Q15 8 13.500 8 H11.500"/><path d="M8.500 12.500 V2 M5 5.200 L8.500 1.700 L12 5.200"/></svg>
<svg style="left:1376px;top:271px" width="19" height="16" viewBox="0 0 19 16" fill="none" stroke="#3a3a3a" stroke-width="1.100" stroke-linejoin="round" stroke-linecap="round"><rect x="1.500" y="1.500" width="16" height="13" rx="1.800"/><path d="M4 5 L9.500 9.500 L15 5"/></svg>
<div class="a" style="left:1381px;top:306px;width:9px;height:1px;background:#d2d2d2"></div>
<svg style="left:1377px;top:326px" width="17" height="17" viewBox="0 0 17 17" fill="none" stroke="#3a3a3a" stroke-width="1.100" stroke-linejoin="round"><path d="M3.500 1.500 H12.500 L15 4 V13.500 Q15 15.500 13 15.500 H3.500 Q1.500 15.500 1.500 13.500 V3.500 Q1.500 1.500 3.500 1.500 Z"/><path d="M5 1.500 V4.500 H11 V1.500"/><circle cx="8.300" cy="10.500" r="2.300"/></svg>
<div class="a" style="left:1373.800px;top:770px;width:23.500px;height:23px;background:#fdfdfd;border-radius:2px"></div>
<svg style="left:1376.2px;top:772.0px" width="18.5" height="18.5" viewBox="0 0 20 20" fill="none" stroke-width="2.1" stroke-linecap="round"><defs><linearGradient id="ca2" gradientUnits="userSpaceOnUse" x1="2" y1="9" x2="10" y2="4"><stop offset="0" stop-color="#9a72d8"/><stop offset="0.6" stop-color="#9f80e6"/><stop offset="1" stop-color="#5d7fd8"/></linearGradient><linearGradient id="cb2" gradientUnits="userSpaceOnUse" x1="10" y1="4" x2="17" y2="10"><stop offset="0" stop-color="#4c86d4"/><stop offset="0.6" stop-color="#3f93c4"/><stop offset="1" stop-color="#35ac9c"/></linearGradient><linearGradient id="cc2" gradientUnits="userSpaceOnUse" x1="17" y1="10" x2="10" y2="17"><stop offset="0" stop-color="#36b596"/><stop offset="0.6" stop-color="#45d192"/><stop offset="1" stop-color="#86cc58"/></linearGradient><linearGradient id="cd2" gradientUnits="userSpaceOnUse" x1="10" y1="17" x2="3" y2="10"><stop offset="0" stop-color="#cfca3c"/><stop offset="0.5" stop-color="#f2c62f"/><stop offset="1" stop-color="#dda22a"/></linearGradient></defs><path d="M5.400 10 Q4.100 9.750 3.170 8.830 A4 4 0 0 1 8.830 3.170 Q9.750 4.100 10 5.400" stroke="url(#ca2)"/><path d="M10 5.400 Q10.250 4.100 11.170 3.170 A4 4 0 0 1 16.830 8.830 Q15.900 9.750 14.600 10" stroke="url(#cb2)"/><path d="M14.600 10 Q15.900 10.250 16.830 11.170 A4 4 0 0 1 11.170 16.830 Q10.250 15.900 10 14.600" stroke="url(#cc2)"/><path d="M10 14.600 Q9.750 15.900 8.830 16.830 A4 4 0 0 1 3.170 11.170 Q4.100 10.250 5.400 10" stroke="url(#cd2)"/></svg>
<svg style="left:1376px;top:812px" width="19" height="18" viewBox="0 0 19 18" fill="none" stroke="#3a3a3a" stroke-width="1.100" stroke-linejoin="round" stroke-linecap="round"><path d="M3 1.500 H16 Q17.500 1.500 17.500 3 V11.500 Q17.500 13 16 13 H11.500 L9.500 16 L7.500 13 H3 Q1.500 13 1.500 11.500 V3 Q1.500 1.500 3 1.500 Z"/><path d="M5 5 H14 M5 7.500 H14 M5 10 H10.500"/></svg>
</div>
</body></html>
